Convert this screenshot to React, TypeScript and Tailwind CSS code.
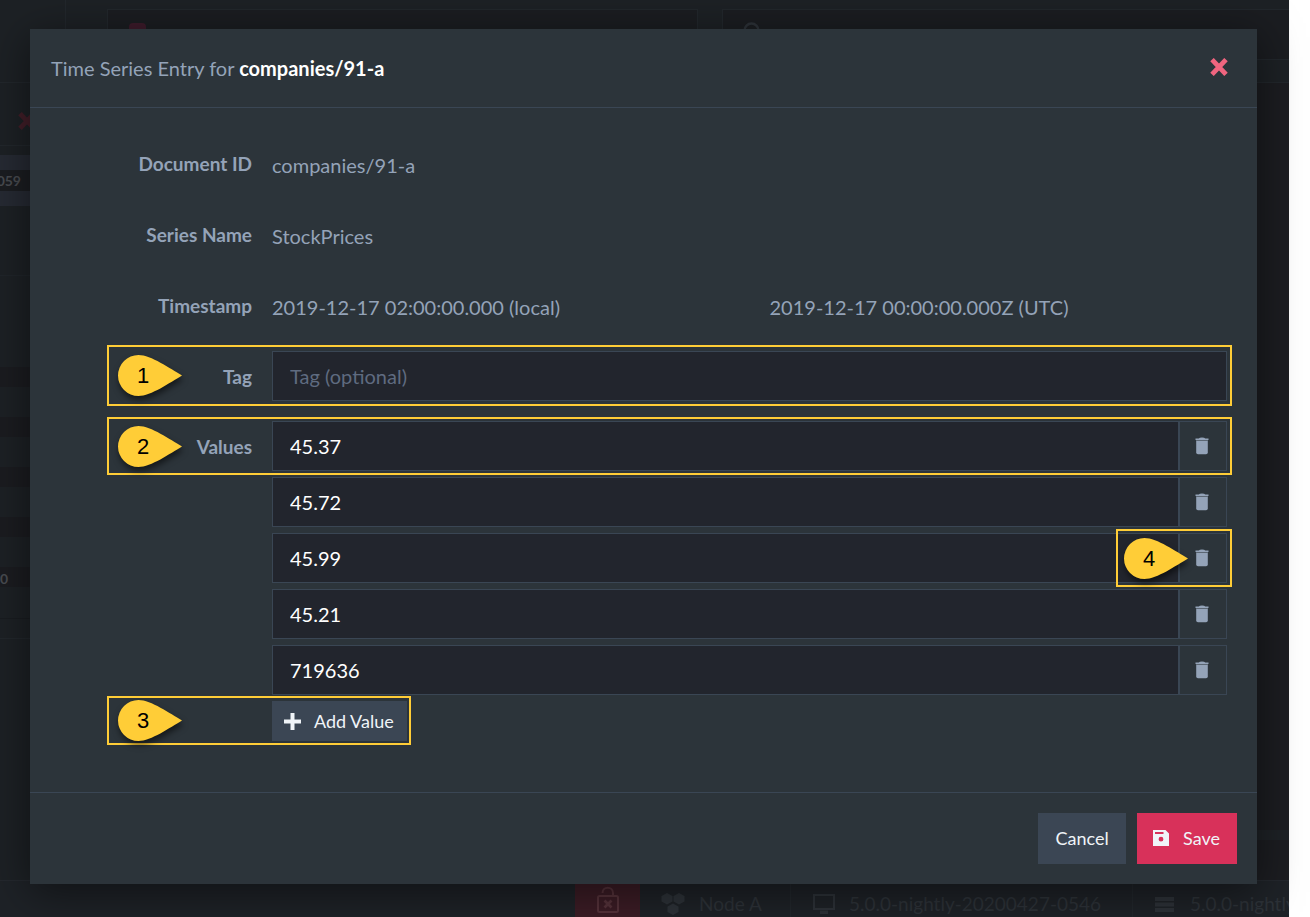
import { useState } from "react";
import type { ReactNode } from "react";

function CrossIcon({ className }: { className: string }) {
  return (
    <svg viewBox="0 0 18 18" className={className} fill="none" stroke="currentColor" strokeWidth="4.8" aria-hidden="true">
      <path d="M2 1.6 16 16.4M16 1.6 2 16.4" />
    </svg>
  );
}

function TrashIcon() {
  return (
    <svg viewBox="0 0 14 18" className="h-[18px] w-[14px]" fill="currentColor" aria-hidden="true">
      <path d="M.5 1.5h3.2Q4.5.4 7 .4t3.3 1.1h3.2V3H.5z" />
      <path d="M1 3h12v1H1z" opacity=".45" />
      <path d="M1.2 4h11.6v11.4q0 1.8-1.8 1.8H3q-1.8 0-1.8-1.8z" />
    </svg>
  );
}

function PlusIcon() {
  return (
    <svg viewBox="0 0 17 17" className="h-[17px] w-[17px]" fill="currentColor" aria-hidden="true">
      <path d="M6.500 0h4v6.500H17v4h-6.500V17h-4v-6.500H0v-4h6.500z" />
    </svg>
  );
}

function SaveIcon() {
  return (
    <svg viewBox="0 0 16 16" className="h-4 w-4" fill="currentColor" fillRule="evenodd" aria-hidden="true">
      <path d="M0 0h12.500L16 3.500V16H0zM2 2v2h8.500V2zM8 6.800a2.400 2.400 0 1 0 0 4.800 2.400 2.400 0 0 0 0-4.800z" />
    </svg>
  );
}

function Pin({ label }: { label: string }) {
  return (
    <span className="relative block h-[42px] w-16">
      <svg viewBox="0 0 64 42" className="block h-full w-full overflow-visible drop-shadow-[1px_4px_3px_rgba(0,0,0,0.55)]" aria-hidden="true">
        <path d="M64 20.500C52 13.500 33 0 20.500 0a20.500 20.500 0 0 0 0 41C33 41 52 27.500 64 20.500z" fill="#ffcd37" />
      </svg>
      <span className="absolute inset-y-0 left-0 flex w-[50px] items-center justify-center font-['Liberation_Sans',sans-serif] text-[22px] leading-none text-black">
        {label}
      </span>
    </span>
  );
}

function Row({ label, htmlFor, children, top }: { label: string; htmlFor?: string; children: ReactNode; top?: boolean }) {
  return (
    <div className={top ? "relative flex items-start gap-5" : "relative flex min-h-[50px] items-center gap-5"}>
      {htmlFor ? (
        <label htmlFor={htmlFor} className={top ? "w-36 shrink-0 pt-[14px] text-right text-[19px] leading-6 font-bold" : "w-36 shrink-0 pt-px text-right text-[19px] leading-6 font-bold"}>
          {label}
        </label>
      ) : (
        <span className="w-36 shrink-0 pt-0.5 text-right text-[19px] leading-6 font-bold">{label}</span>
      )}
      <div className="min-w-0 flex-1">{children}</div>
    </div>
  );
}

const FRAME = "pointer-events-none absolute border-2 border-[#ffcd37]";

function Backdrop() {
  return (
    <div aria-hidden="true" className="flex h-full flex-col overflow-hidden bg-[#1d2125] text-[#2d3238]">
      <div className="flex min-h-0 flex-1">
        <div className="flex w-[66px] shrink-0 flex-col border-r border-[#22272c]">
          <div className="h-[83px] border-b border-[#22272c]" />
          <div className="flex h-[63px] items-center border-b border-[#22272c] pt-[14px] pl-[18px] text-[#421e28]">
            <CrossIcon className="h-[18px] w-[18px]" />
          </div>
          <div className="mt-[9px] flex h-[51px] items-center justify-start bg-[#262a33]">
            <span className="flex h-[21px] w-[21px] justify-end bg-[#1b1d21] text-[14px] leading-[21px] font-bold text-[#484b50]">059</span>
            <span className="h-[21px] flex-1 bg-[#1b1d21]" />
          </div>
          <div className="h-[70px] border-b border-[#20252a]" />
          <div className="mt-[91px] flex flex-col gap-[30px] text-[14px] leading-5 font-bold text-[#484b50]">
            <div className="h-5 bg-[#1b1c20]" />
            <div className="h-5 bg-[#1b1c20]" />
            <div className="h-5 bg-[#1b1c20]" />
            <div className="h-5 bg-[#1b1c20]" />
            <div className="h-5 bg-[#1b1c20] pt-0.5">0</div>
          </div>
          <div className="h-8 border-b border-[#191c20]" />
          <div className="h-5 border-b border-[#22272c]" />
        </div>
        <div className="flex min-w-0 flex-1 flex-col">
          <div className="flex gap-6 pt-[9px] pl-[41px]">
            <div className="h-[51px] w-[591px] border border-[#22272c] bg-[#1b1d21] pt-[13px] pl-[21px]">
              <div className="h-4 w-[17px] rounded bg-[#3d1b2b]" />
            </div>
            <div className="h-[51px] flex-1 border border-r-0 border-[#22272c] bg-[#1b1d21] pt-3 pl-5">
              <svg viewBox="0 0 20 20" className="h-5 w-5" fill="none" stroke="currentColor" strokeWidth="2.500">
                <circle cx="8.500" cy="8.500" r="7" />
                <path d="m13 13 6 6" />
              </svg>
            </div>
          </div>
          <div className="h-[23px] border-b border-[#22272c]" />
          <div className="flex-1 bg-[#1c1d21]" />
          <div className="h-2.5 bg-[#1e2226]" />
          <div className="h-10 bg-[#1c1d21]" />
        </div>
      </div>
      <div className="h-[37px] shrink-0 border-t border-[#24282e] bg-[#1e2227]">
        <div className="flex h-[46px] pl-[575px] text-[19px] whitespace-nowrap">
          <div className="flex w-[65px] shrink-0 justify-center bg-[#3b1c25] pt-[5px] text-[#55323a]">
            <svg viewBox="0 0 22 28" className="h-7 w-[22px]" fill="none" stroke="currentColor" strokeWidth="2">
              <rect x="1" y="10" width="20" height="16" rx="1.500" />
              <path d="M5.500 7c0-7 10.500-7 10.500 0v3" />
              <path d="m7.500 14.500 7 7m0-7-7 7" strokeWidth="2.800" />
            </svg>
          </div>
          <div className="flex w-[151px] shrink-0 items-center gap-[14px] border-r border-[#22272c] pl-[21px]">
            <svg viewBox="0 0 24 22" className="h-[22px] w-6" fill="currentColor">
              <path d="M6 0l5.500 3v5.500l-5.500 3-5.500-3V3zM18 0l5.500 3v5.500l-5.500 3-5.500-3V3zM12 10.500l5.500 3V19l-5.500 3-5.500-3v-5.500z" />
            </svg>
            <span>Node A</span>
          </div>
          <div className="flex w-[342px] shrink-0 items-center gap-[14px] border-r border-[#22272c] pl-[22px]">
            <svg viewBox="0 0 22 20" className="h-5 w-[22px]" fill="none" stroke="currentColor" strokeWidth="2">
              <path d="M1 1h20v14H1z" />
              <path d="M8 17.500h6v2H8z" fill="currentColor" />
            </svg>
            <span>5.0.0-nightly-20200427-0546</span>
          </div>
          <div className="flex min-w-0 flex-1 items-center gap-4 pl-[22px]">
            <svg viewBox="0 0 19 15" className="h-[15px] w-[19px] shrink-0" fill="currentColor">
              <path d="M0 0h19v4H0zM0 5.500h19v4H0zM0 11h19v4H0z" />
            </svg>
            <span>5.0.0-nightly</span>
          </div>
        </div>
      </div>
    </div>
  );
}

export default function App() {
  const [tag, setTag] = useState("");
  const [values, setValues] = useState(["45.37", "45.72", "45.99", "45.21", "719636"]);

  return (
    <div className="min-h-screen bg-white pr-[21px] font-[Lato,sans-serif]">
      <div className="relative h-screen min-h-[917px]">
        <Backdrop />
        <div className="absolute inset-0 pt-[29px] pr-8 pl-[30px]">
          <section
            role="dialog"
            aria-labelledby="dialog-title"
            className="bg-[#2c343a] text-[20px] leading-6 text-[#94a3b8] shadow-[0_8px_40px_rgba(0,0,0,0.5)]"
          >
            <header className="flex h-[79px] items-center justify-between border-b border-[#3a4654] pr-[29px] pl-[21px]">
              <h1 id="dialog-title">
                Time Series Entry for <strong className="font-bold text-white">companies/91-a</strong>
              </h1>
              <button type="button" aria-label="Close" className="pb-0.5 text-[#f0657f]">
                <CrossIcon className="h-[18px] w-[18px]" />
              </button>
            </header>

            <div className="flex flex-col gap-5 pt-[30px] pr-[30px] pb-[51px] pl-[78px]">
              <div className="flex flex-col gap-[21px] pb-px">
                <Row label="Document ID">
                  <p className="pt-1">companies/91-a</p>
                </Row>
                <Row label="Series Name">
                  <p className="pt-1">StockPrices</p>
                </Row>
                <Row label="Timestamp">
                  <div className="grid grid-cols-2 gap-10 pt-1">
                    <p>2019-12-17 02:00:00.000 (local)</p>
                    <p>2019-12-17 00:00:00.000Z (UTC)</p>
                  </div>
                </Row>
              </div>

              <div className="relative">
                <Row label="Tag" htmlFor="tag">
                  <input
                    id="tag"
                    value={tag}
                    onChange={(e) => setTag(e.target.value)}
                    placeholder="Tag (optional)"
                    className="block h-[50px] w-full border border-[#3a4654] bg-[#22252d] px-[17px] text-white outline-none placeholder:text-[#5f6b80]"
                  />
                </Row>
                <div className={`${FRAME} -top-1.5 -right-[5px] -bottom-[5px] -left-px pt-2 pl-[9px]`}>
                  <Pin label="1" />
                </div>
              </div>

              <div className="flex flex-col gap-1.5">
                <Row label="Values" htmlFor="value-0" top>
                  <ul className="flex flex-col gap-1.5">
                    {values.map((value, i) => (
                      <li key={i} className="relative flex h-[50px]">
                        <input
                          id={`value-${i}`}
                          aria-label={`Value ${i + 1}`}
                          value={value}
                          onChange={(e) => setValues(values.map((v, j) => (j === i ? e.target.value : v)))}
                          className="min-w-0 flex-1 border border-[#3a4654] bg-[#22252d] px-[17px] text-white outline-none"
                        />
                        <button
                          type="button"
                          aria-label={`Remove value ${i + 1}`}
                          onClick={() => setValues(values.filter((_, j) => j !== i))}
                          className="flex w-12 items-center justify-center border border-[#3a4654] pr-0.5"
                        >
                          <TrashIcon />
                        </button>
                        {i === 0 && (
                          <div className={`${FRAME} -top-1 -right-[5px] -bottom-1 -left-[165px] pt-[7px] pl-[9px]`}>
                            <Pin label="2" />
                          </div>
                        )}
                        {i === 2 && (
                          <div className={`${FRAME} -top-1 -right-[5px] -bottom-1 w-[116px] pt-[7px] pl-1.5`}>
                            <Pin label="4" />
                          </div>
                        )}
                      </li>
                    ))}
                  </ul>
                </Row>
                <div className="pl-[164px]">
                  <div className="relative w-fit">
                    <button
                      type="button"
                      onClick={() => setValues([...values, ""])}
                      className="flex h-10 items-center gap-[13px] bg-[#3b4654] pr-[13px] pl-3 text-[18px] text-[#f0f4f8]"
                    >
                      <PlusIcon />
                      Add Value
                    </button>
                    <div className={`${FRAME} -top-[5px] -right-1 -bottom-1 -left-[165px] pt-0.5 pl-[9px]`}>
                      <Pin label="3" />
                    </div>
                  </div>
                </div>
              </div>
            </div>

            <footer className="flex justify-end gap-[11px] border-t border-[#3a4654] p-5 text-[18px] text-[#f0f4f8]">
              <button type="button" className="h-[51px] w-[88px] bg-[#3b4654] pb-0.5">
                Cancel
              </button>
              <button type="button" className="flex h-[51px] items-center gap-[14px] bg-[#d8315a] pr-[17px] pb-0.5 pl-4">
                <SaveIcon />
                Save
              </button>
            </footer>
          </section>
        </div>
      </div>
    </div>
  );
}
